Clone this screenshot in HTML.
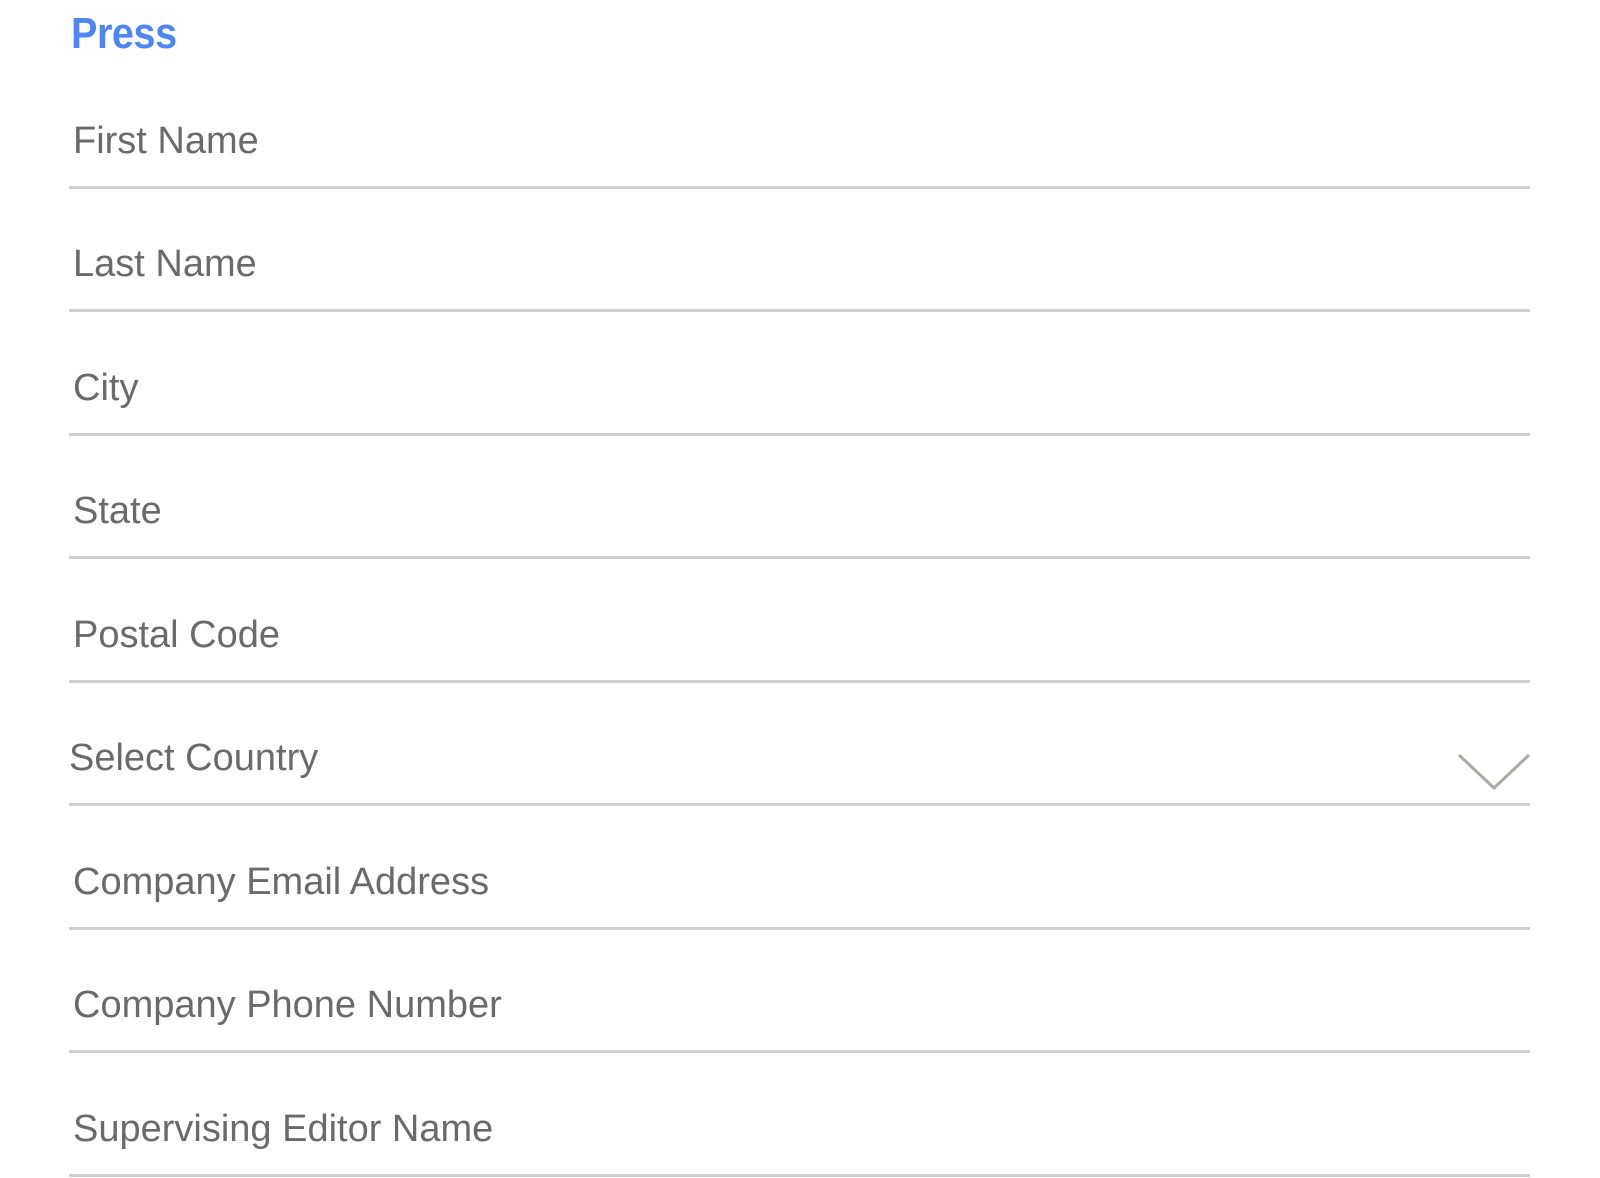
<!DOCTYPE html>
<html><head><style>
html,body{margin:0;padding:0;background:#fff;width:1600px;height:1178px;overflow:hidden;position:relative;font-family:"Liberation Sans",sans-serif}
.h{position:absolute;left:71px;top:6px;font-size:44px;color:#4f86f7;font-weight:bold;line-height:56px;letter-spacing:-0.5px;transform:scaleX(0.9);transform-origin:left}
.f{position:absolute;left:69px;width:1461px;height:3px;background:#cfcfcf}
.t{position:absolute;left:73px;font-size:38px;color:#6a6a6a;line-height:46px}
</style></head><body>
<div class="h">Press</div>
<div class="t" style="top:118px">First Name</div><div class="f" style="top:186px"></div>
<div class="t" style="top:241px">Last Name</div><div class="f" style="top:309px"></div>
<div class="t" style="top:365px">City</div><div class="f" style="top:433px"></div>
<div class="t" style="top:488px">State</div><div class="f" style="top:556px"></div>
<div class="t" style="top:612px">Postal Code</div><div class="f" style="top:680px"></div>
<div class="t" style="top:735px;left:69px">Select Country</div><div class="f" style="top:803px"></div>
<svg style="position:absolute;left:1455px;top:750px" width="80" height="45"><polyline points="4,5 39,38 74,5" fill="none" stroke="#aaa8a4" stroke-width="3"/></svg>
<div class="t" style="top:859px">Company Email Address</div><div class="f" style="top:927px"></div>
<div class="t" style="top:982px">Company Phone Number</div><div class="f" style="top:1050px"></div>
<div class="t" style="top:1106px">Supervising Editor Name</div><div class="f" style="top:1174px"></div>
</body></html>
